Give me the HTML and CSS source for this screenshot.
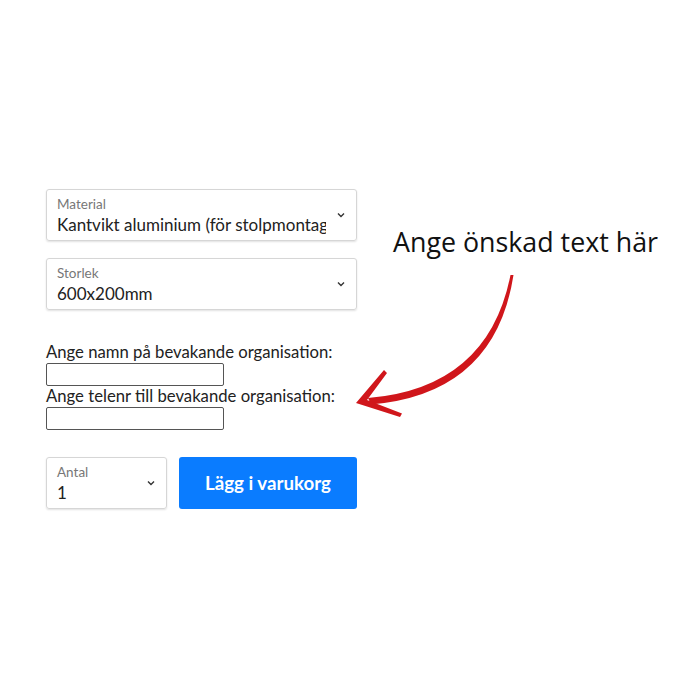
FILE: index.html
```html
<!DOCTYPE html>
<html lang="sv">
<head>
    <meta charset="UTF-8">
    <meta name="viewport" content="width=device-width, initial-scale=1.0">
    <title>Skylt</title>
    <link rel="stylesheet" href="styles.css">
</head>
<body>
    <div class="page">
        <form class="product-form">
            <div class="select-box">
                <span class="select-label">Material</span>
                <span class="select-value">Kantvikt aluminium (för stolpmontage)</span>
                <svg class="chevron" width="8" height="6" viewBox="0 0 8 6"><path d="M1 1.5 L4 4.5 L7 1.5" fill="none" stroke="#333" stroke-width="1.4"/></svg>
            </div>
            <div class="select-box">
                <span class="select-label">Storlek</span>
                <span class="select-value">600x200mm</span>
                <svg class="chevron" width="8" height="6" viewBox="0 0 8 6"><path d="M1 1.5 L4 4.5 L7 1.5" fill="none" stroke="#333" stroke-width="1.4"/></svg>
            </div>

            <div class="text-fields">
                <label for="org-name">Ange namn på bevakande organisation:</label>
                <input type="text" id="org-name">
                <label for="org-phone">Ange telenr till bevakande organisation:</label>
                <input type="text" id="org-phone">
            </div>

            <div class="buy-row">
                <div class="select-box qty">
                    <span class="select-label">Antal</span>
                    <span class="select-value">1</span>
                    <svg class="chevron" width="8" height="6" viewBox="0 0 8 6"><path d="M1 1.5 L4 4.5 L7 1.5" fill="none" stroke="#333" stroke-width="1.4"/></svg>
                </div>
                <button type="button" class="add-btn">Lägg i varukorg</button>
            </div>
        </form>

        <div class="note">Ange önskad text här</div>
        <svg class="arrow" width="700" height="700" viewBox="0 0 700 700">
            <path d="M510.5 275 Q488 388 368 398 L371 404.5 Q495 394 513.5 275 Z" fill="#d0161b"/>
            <polygon points="356,403 384,370 387,373 367,400 402,413.5 400,417" fill="#d0161b"/>
        </svg>
    </div>
</body>
</html>
```

FILE: styles.css
```css
body {
    margin: 0;
    background: #fff;
    font-family: Lato, "Open Sans", sans-serif;
    color: #222;
}
.page {
    position: relative;
    width: 700px;
    height: 700px;
}
.product-form {
    display: flex;
    flex-direction: column;
    width: 311px;
    padding: 189px 0 0 46px;
}
.select-box {
    position: relative;
    display: flex;
    flex-direction: column;
    height: 52px;
    box-sizing: border-box;
    padding: 6px 30px 0 10px;
    border: 1px solid #d6d6d6;
    border-radius: 3px;
    box-shadow: 0 1px 2px rgba(0, 0, 0, 0.12);
    margin-bottom: 17px;
}
.select-label {
    font-size: 13.5px;
    line-height: 16px;
    color: #777;
}
.select-value {
    margin-top: 2px;
    font-size: 17px;
    line-height: 22px;
    color: #222;
    white-space: nowrap;
    overflow: hidden;
}
.chevron {
    position: absolute;
    right: 11px;
    top: 22px;
}
.text-fields {
    display: flex;
    flex-direction: column;
    align-items: flex-start;
    margin-top: 15px;
    font-size: 16.7px;
}
.text-fields label {
    line-height: 21px;
}
.text-fields input {
    width: 178px;
    height: 23px;
    box-sizing: border-box;
    margin: 0;
    border: 1px solid #555;
    border-radius: 2px;
}
.buy-row {
    display: flex;
    gap: 12px;
    margin-top: 27px;
}
.select-box.qty {
    width: 121px;
    margin-bottom: 0;
}
.add-btn {
    flex: 1;
    height: 52px;
    border: none;
    border-radius: 3px;
    background: #0a7cff;
    color: #fff;
    font-family: Lato, sans-serif;
    font-weight: bold;
    font-size: 18.7px;
    cursor: pointer;
}
.note {
    position: absolute;
    left: 393px;
    top: 223px;
    font-family: "Open Sans", sans-serif;
    font-size: 26.8px;
    color: #111;
    white-space: nowrap;
}
.arrow {
    position: absolute;
    left: 0;
    top: 0;
    pointer-events: none;
}
```
